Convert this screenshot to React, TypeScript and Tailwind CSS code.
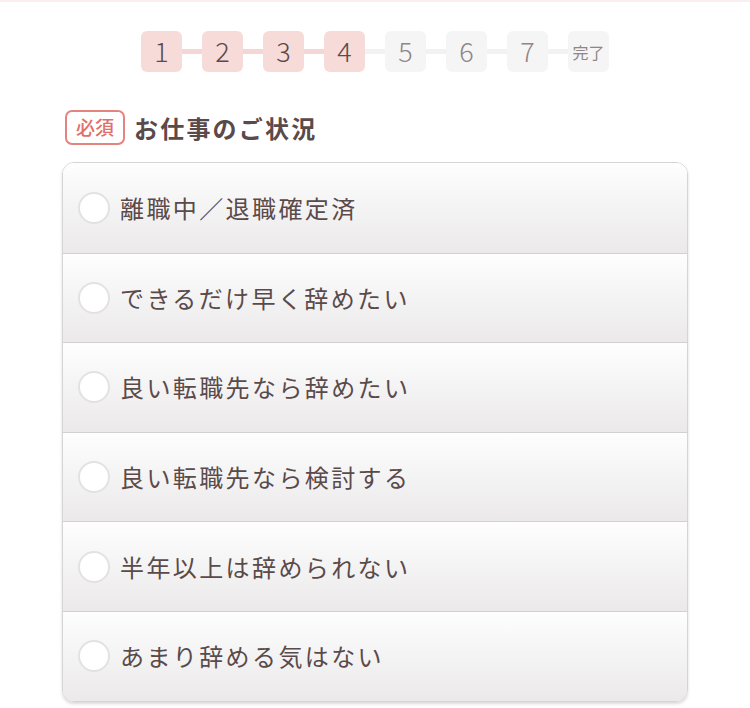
import React from "react";

const steps = ["1", "2", "3", "4", "5", "6", "7", "完了"];
const options = [
  "離職中／退職確定済",
  "できるだけ早く辞めたい",
  "良い転職先なら辞めたい",
  "良い転職先なら検討する",
  "半年以上は辞められない",
  "あまり辞める気はない",
];

const font = { fontFamily: '"Noto Sans CJK JP", "Noto Sans", sans-serif' };

export default function App() {
  return (
    <div className="w-[750px] h-[708px] bg-white overflow-hidden" style={font}>
      <div className="h-[2px] bg-[#fbeeee]" />
      <div className="flex justify-center pt-[29px]">
        <div className="flex items-center">
          {steps.map((s, i) => {
            const active = i < 4;
            return (
              <React.Fragment key={s}>
                {i > 0 && (
                  <div
                    className={`w-[20px] h-[5px] ${i < 4 ? "bg-[#f5d6d4]" : "bg-[#f3f2f2]"}`}
                  />
                )}
                <div
                  className={`w-[41px] h-[41px] rounded-[6px] flex items-center justify-center ${
                    active ? "bg-[#f6dbd9] text-[#5a4a4a]" : "bg-[#f5f5f5] text-[#8f8686]"
                  } ${s === "完了" ? "text-[16px]" : "text-[27px] font-light"}`}
                >
                  {s}
                </div>
              </React.Fragment>
            );
          })}
        </div>
      </div>
      <div className="w-[626px] mx-auto">
        <div className="flex items-center mt-[38px] pl-[3px] h-[35px]">
          <div className="h-[35px] w-[60px] rounded-[7px] border-2 border-[#e5837e] text-[#e0706b] text-[19px] font-medium flex items-center justify-center">
            必須
          </div>
          <div className="ml-[9px] text-[24px] font-bold text-[#5a4a4a] tracking-[2.2px]">
            お仕事のご状況
          </div>
        </div>
        <div className="mt-[17px] rounded-[12px] border border-[#d6d4d4] overflow-hidden shadow-[0_2px_3px_rgba(0,0,0,0.15)]">
          {options.map((o, i) => (
            <div
              key={o}
              className={`h-[89.6px] flex items-center pl-[15px] bg-gradient-to-b from-[#fefefe] to-[#ebe9e9] ${
                i > 0 ? "border-t border-[#d3d0d0]" : ""
              }`}
            >
              <div className="w-[32px] h-[32px] rounded-full bg-white border-2 border-[#e3e1e1]" />
              <div className="ml-[10px] text-[24px] text-[#5a4a4a] tracking-[2.4px]">{o}</div>
            </div>
          ))}
        </div>
      </div>
    </div>
  );
}
